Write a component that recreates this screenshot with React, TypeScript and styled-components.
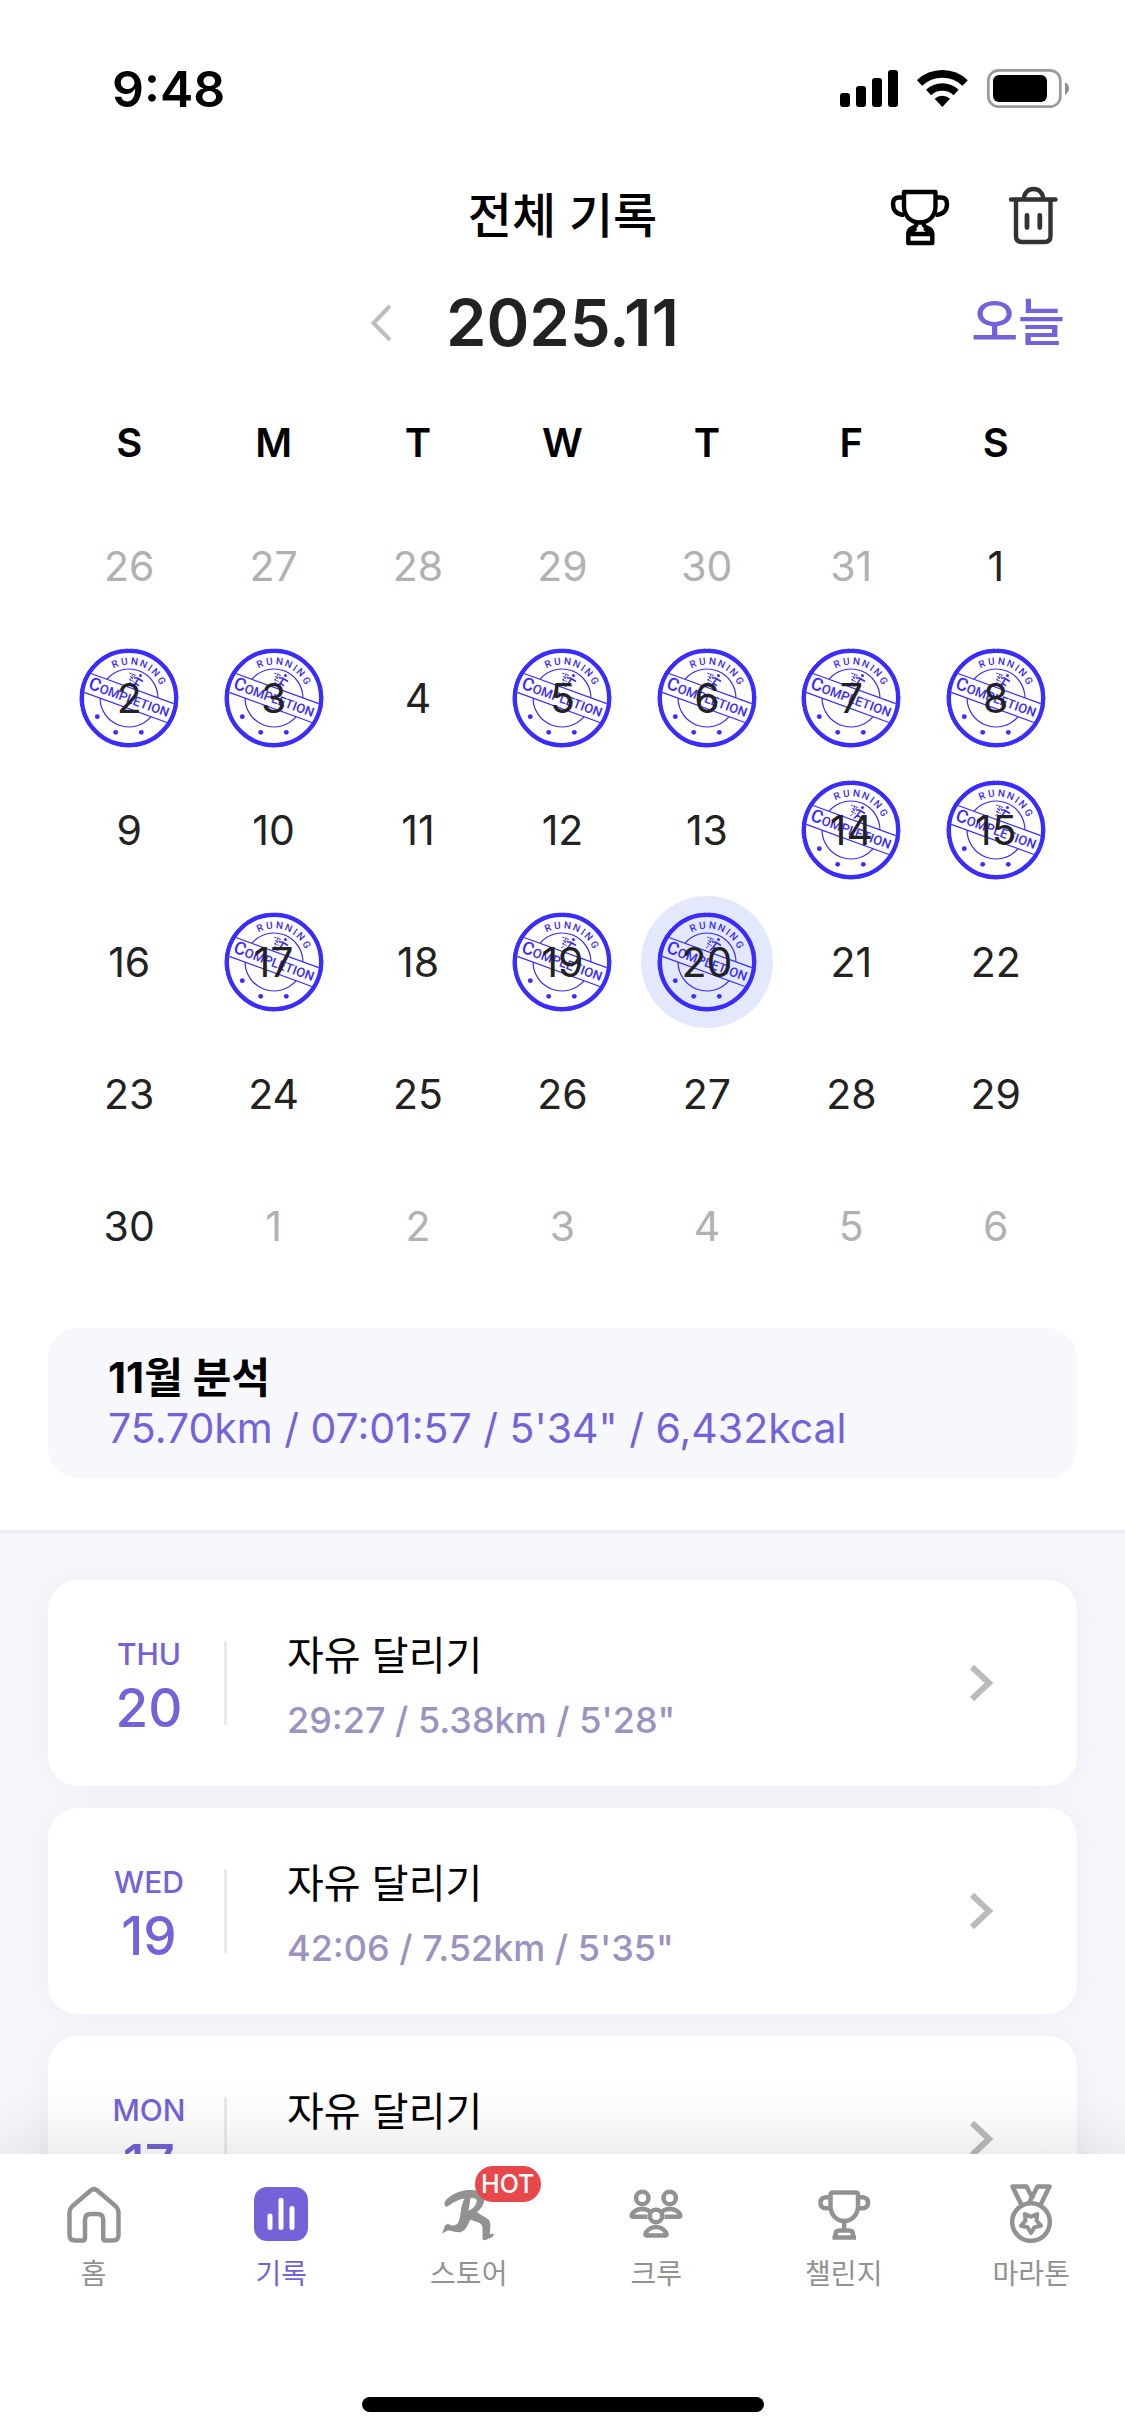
import React from "react";
import styled, { createGlobalStyle } from "styled-components";

const PURPLE = "#7463d8";
const GREY = "#929292";
const STAMP = "#3a2bff";

const GlobalStyle = createGlobalStyle`
  *, *::before, *::after { box-sizing: border-box; }
  body {
    margin: 0;
    background: #fff;
    color: #000;
    font-family: Inter, "Noto Sans CJK KR", sans-serif;
  }
  button {
    padding: 0;
    border: 0;
    background: none;
    color: inherit;
    font: inherit;
    cursor: pointer;
  }
  a { color: inherit; text-decoration: none; }
  h1, h2, h3, p { margin: 0; font: inherit; }
  svg { display: block; flex: none; }
`;

const Screen = styled.div`
  display: flex;
  flex-direction: column;
  height: 100vh;
  overflow: hidden;
`;

const StatusBar = styled.header`
  display: flex;
  flex: none;
  align-items: center;
  justify-content: space-between;
  height: 150px;
  padding: 27px 56px 0 112px;
`;

const Clock = styled.time`
  font-size: 50px;
  font-weight: 600;
  line-height: 60px;
`;

const StatusIcons = styled.div`
  display: flex;
  gap: 19px;
`;

const ThreePart = styled.div`
  display: grid;
  grid-template-columns: 1fr auto 1fr;
  flex: none;
  align-items: center;
`;

const TitleBar = styled(ThreePart)`
  height: 131px;
  padding: 0 62px;
`;

const PageTitle = styled.h1`
  grid-column: 2;
  font-size: 48px;
  font-weight: 500;
  line-height: 72px;
`;

const TitleActions = styled.div`
  display: flex;
  justify-content: flex-end;
  gap: 53px;
`;

const MonthBar = styled(ThreePart)`
  height: 84px;
  padding: 0 60px;
`;

const MonthLabel = styled.h2`
  color: #222;
  font-size: 65px;
  font-weight: 600;
  line-height: 84px;
`;

const PrevButton = styled.button`
  justify-self: end;
  margin-right: 52px;
`;

const TodayButton = styled.button`
  justify-self: end;
  color: ${PURPLE};
  font-size: 51px;
  font-weight: 500;
  line-height: 72px;
`;

const Content = styled.main`
  display: flex;
  flex: 1;
  flex-direction: column;
  min-height: 0;
  overflow: hidden;
`;

const CalendarWrap = styled.section`
  flex: none;
  padding: 19px 57px 36px;
`;

const CalendarTable = styled.table`
  width: 100%;
  border-collapse: collapse;
  table-layout: fixed;
`;

const Weekday = styled.th`
  height: 116px;
  padding: 0;
  font-size: 40px;
  font-weight: 600;
`;

const DayCell = styled.td`
  height: 132px;
  padding: 0;
`;

const DayButton = styled.button<{ $muted: boolean; $selected: boolean }>`
  display: grid;
  place-items: center;
  width: 132px;
  height: 132px;
  margin: 0 auto;
  border-radius: 50%;
  background: ${(p) => (p.$selected ? "#e4e8fd" : "transparent")};
  color: ${(p) => (p.$muted ? "#b1b1b1" : "#222")};
  font-size: 41px;

  > * { grid-area: 1 / 1; }
`;

const Summary = styled.section`
  flex: none;
  margin: 0 48px 52px;
  padding: 24px 60px;
  border-radius: 30px;
  background: #f7f8fc;
`;

const SummaryTitle = styled.h2`
  font-size: 42px;
  font-weight: 700;
  line-height: 51px;
`;

const SummaryText = styled.p`
  color: ${PURPLE};
  font-size: 41px;
  line-height: 51px;
`;

const RunList = styled.ul`
  display: flex;
  flex: none;
  flex-direction: column;
  gap: 22px;
  margin: 0;
  padding: 47px 48px;
  border-top: 3px solid #ededf7;
  background: #f6f7fc;
  list-style: none;
`;

const RunCard = styled.a`
  display: flex;
  align-items: center;
  height: 206px;
  padding: 0 82px 0 51px;
  border-radius: 30px;
  background: #fff;
  box-shadow: 0 0 30px rgba(30, 30, 80, 0.04);
`;

const RunDate = styled.div`
  display: flex;
  flex-direction: column;
  align-items: center;
  width: 100px;
  padding-top: 8px;
  color: ${PURPLE};
  font-weight: 500;
`;

const RunWeekday = styled.span`
  font-size: 30px;
  line-height: 42px;
`;

const RunDay = styled.span`
  font-size: 53px;
  line-height: 66px;
`;

const Rule = styled.span`
  width: 3px;
  height: 84px;
  margin: 0 60px 0 25px;
  background: #ebebeb;
`;

const RunInfo = styled.div`
  flex: 1;
  padding-top: 8px;
`;

const RunName = styled.h3`
  font-size: 40px;
  line-height: 66px;
`;

const RunStats = styled.p`
  color: #9b92c0;
  font-size: 36px;
  font-weight: 500;
  line-height: 62px;
`;

const TabBar = styled.nav`
  position: relative;
  flex: none;
  padding-top: 30px;
  background: #fff;
  box-shadow: 0 0 75px rgba(0, 0, 0, 0.14);
`;

const TabRow = styled.div`
  display: grid;
  grid-template-columns: repeat(6, 1fr);
`;

const Tab = styled.a<{ $active: boolean }>`
  display: flex;
  flex-direction: column;
  align-items: center;
  gap: 12px;
  color: ${(p) => (p.$active ? PURPLE : GREY)};
  font-size: 28px;
  line-height: 36px;
`;

const TabIcon = styled.span`
  position: relative;
`;

const HotBadge = styled.span`
  position: absolute;
  top: -18px;
  left: 36px;
  width: 66px;
  border-radius: 18px;
  background: #e8484b;
  color: #fff;
  font-size: 25px;
  font-weight: 500;
  line-height: 36px;
  text-align: center;
`;

const HomeIndicator = styled.div`
  width: 402px;
  height: 15px;
  margin: 105px auto 24px;
  border-radius: 8px;
  background: #000;
`;

const StampArt = styled.svg`
  text {
    fill: ${STAMP};
    font-family: Roboto, sans-serif;
    font-weight: 500;
  }
`;

function SignalIcon() {
  return (
    <svg width="58" height="39" viewBox="60 42 174 117">
      <rect x="60" y="114" width="30" height="42" rx="9" />
      <rect x="108" y="93" width="30" height="63" rx="9" />
      <rect x="156" y="69" width="30" height="87" rx="9" />
      <rect x="204" y="45" width="30" height="111" rx="9" />
    </svg>
  );
}

function WifiIcon() {
  return (
    <svg width="51" height="39" viewBox="291 42 153 117" fill="none" stroke="#000">
      <path d="M298.5 83.8A99.5 99.5 0 0 1 435.5 83.8" strokeWidth="23" />
      <path d="M325.7 112.5A60 60 0 0 1 408.3 112.5" strokeWidth="22" />
      <path d="M367 156L344 131A34 34 0 0 1 390 131Z" fill="#000" stroke="none" />
    </svg>
  );
}

function BatteryIcon() {
  return (
    <svg width="82" height="39" viewBox="501 42 246 117">
      <rect x="505" y="46" width="216" height="109" rx="31" fill="none" stroke="#9a9a9a" strokeWidth="8" />
      <rect x="519" y="60" width="162" height="81" rx="18" />
      <path d="M735 82Q747 88 747 100.500Q747 113 735 119Z" fill="#8f8f8f" />
    </svg>
  );
}

function AwardIcon() {
  return (
    <svg width="60" height="60" viewBox="0 0 60 60" fill="none" stroke="#000" strokeWidth="4.4" strokeLinejoin="round">
      <path d="M14 6H45.500V20C45.500 29 40 36.500 29.800 36.500C19.500 36.500 14 29 14 20Z" />
      <path d="M14 11.500H9Q3 11.500 3 18Q3 28 14 29M45.500 11.500H51Q57 11.500 57 18Q57 28 45.500 29" />
      <path d="M26.500 37C27 44 18.300 39.500 18.300 48M33.500 37C33 44 42.300 39.500 42.300 48" />
      <path d="M18.300 48H42.300V57H18.300Z" />
      <path d="M21 46L26 42M39.500 46L34.500 42" />
    </svg>
  );
}

function TrashIcon() {
  return (
    <svg width="60" height="60" viewBox="0 0 60 60" fill="none" stroke="#333" strokeWidth="4.4" strokeLinecap="round">
      <path d="M8 13.500H52.500M21 12.500C21 7 25 3 30.500 3S40 7 40 12.500" />
      <path d="M13 14V50Q13 56 19 56H41.500Q47.500 56 47.500 50V14" />
      <path d="M24 29.500V41.500M36.800 29.500V41.500" strokeWidth="4.800" />
    </svg>
  );
}

function PrevIcon() {
  return (
    <svg width="24" height="42" viewBox="0 0 24 42" fill="none" stroke="#bdbdbd" strokeWidth="4">
      <path d="M20 4L3.500 21L20 38" />
    </svg>
  );
}

function NextIcon() {
  return (
    <svg width="26" height="40" viewBox="0 0 26 40" fill="none" stroke="#bbb" strokeWidth="6">
      <path d="M3 4L20 20L3 36" />
    </svg>
  );
}

/* Letters of the rim text sit on an arc, each one turned to face outwards. */
const RIM_TEXT = "RUNNING";
const RIM_ANGLES = [-22, -7, 8, 23, 35, 46, 62];
const RIM_POINTS = RIM_ANGLES.map((deg, i) => {
  const half = RIM_TEXT[i] === "I" ? 1.4 : 3.3;
  const a = (deg * Math.PI) / 180;
  return {
    x: (50 + 33.5 * Math.sin(a) - half * Math.cos(a)).toFixed(2),
    y: (50 - 33.5 * Math.cos(a) - half * Math.sin(a)).toFixed(2),
    deg,
  };
});

function Stamp() {
  return (
    <StampArt width="100" height="100" viewBox="0 0 100 100" fill="none" stroke={STAMP} aria-hidden="true">
      <circle cx="50" cy="50" r="47" strokeWidth="4" />
      <circle cx="50" cy="50" r="49" strokeWidth="1" strokeDasharray="19 1 38 1.500 31 1 52 1.200 26 1" />
      <g transform="rotate(20 50 50)">
        <path d="M6 40H94M6 60H94M22.800 40A29 29 0 0 1 77.200 40M22.800 60A29 29 0 0 0 77.200 60" strokeWidth="1.200" />
        <text x="50" y="55" textAnchor="middle" fontSize="13" stroke="none">
          <tspan fontSize="18">C</tspan>OMPLETION
        </text>
      </g>
      <text
        x={RIM_POINTS.map((p) => p.x).join(" ")}
        y={RIM_POINTS.map((p) => p.y).join(" ")}
        rotate={RIM_POINTS.map((p) => p.deg).join(" ")}
        fontSize="10"
        stroke="none"
      >
        {RIM_TEXT}
      </text>
      <g fill={STAMP} stroke="none">
        <circle cx="18.300" cy="68.700" r="2.400" />
        <circle cx="36.700" cy="84.300" r="2.400" />
        <circle cx="62.300" cy="84.300" r="2.400" />
        <circle cx="61.500" cy="27.500" r="1.500" />
      </g>
      <path d="M60 30L56.500 35L60 38M56.500 35L53 38.500M60 31L64 33.500M59 30L55 30" strokeWidth="1.600" />
      <path d="M50 25L56 27M51 28L54 31M50 31L55 34M52 34L49 36M54 26L51 33M57 27L53 30" strokeWidth=".8" />
    </StampArt>
  );
}

const line = {
  width: 60,
  height: 60,
  viewBox: "0 0 60 60",
  fill: "none",
  stroke: "currentColor",
  strokeWidth: 4.5,
  strokeLinejoin: "round" as const,
};

function HomeIcon() {
  return (
    <svg {...line}>
      <path d="M5.500 28Q5.500 25 8 22.500L27 6.300Q30 4 33 6.300L52 22.500Q54.500 25 54.500 28V51Q54.500 56.500 49 56.500H41.500Q39.200 56.500 39.200 54V36Q39.200 30 33.500 30H26.500Q21 30 21 36V54Q21 56.500 18.500 56.500H11Q5.500 56.500 5.500 51Z" />
    </svg>
  );
}

function RecordIcon() {
  return (
    <svg width="60" height="60" viewBox="0 0 60 60">
      <rect x="3" y="3" width="54" height="54" rx="13" fill="currentColor" />
      <path d="M19 32V43.500M30 16.200V43.500M41 24.500V43.500" stroke="#fff" strokeWidth="5" strokeLinecap="round" />
    </svg>
  );
}

function StoreIcon() {
  return (
    <svg width="60" height="60" viewBox="0 0 60 60" fill="currentColor">
      <path d="M7.300 23C4 20 5.500 17.500 8.500 14.500C16 8 25 5.500 35 6.200C41 6.500 46 9 45.500 15C45 21 41.500 25.500 38 28C41 31 46 32.500 49.500 35.500C53 39.500 50.500 45 51 50.500C52 49.500 53.500 49.500 55 50L53.500 53L46 56.200L43.500 55.500V44C43.500 37.500 35 38 31.500 35.500C28.500 41 27.500 46 22 48C17.500 49 12 46 8.500 46.500L3 49.800L6 41.500L9 39.500C12 42.500 17.500 42 19 39C22.500 32 21 22 25.500 14.500C19 15.500 14.500 18.500 11.500 20.500ZM31.500 14L29.500 27C34 24.500 37.500 21.500 37.700 16.500C37.700 14.500 35 14 31.500 14Z" />
    </svg>
  );
}

function CrewIcon() {
  return (
    <svg {...line}>
      <circle cx="16.300" cy="14" r="6.200" />
      <circle cx="43.700" cy="14" r="6.200" />
      <circle cx="30" cy="32" r="6.200" />
      <path d="M21.500 32.800H7Q4.500 32.500 6.500 29.500Q10 25 16 25Q21 25 24 27.500M38.500 32.800H53Q55.500 32.500 53.500 29.500Q50 25 44 25Q39 25 36 27.500" />
      <path d="M21 51.500H39Q41.500 51.500 40 48.500Q36.500 43 30 43Q23.500 43 20 48.500Q18.500 51.500 21 51.500Z" />
    </svg>
  );
}

function ChallengeIcon() {
  return (
    <svg {...line}>
      <path d="M16.500 11Q16.500 8.500 19 8.500H41.500Q44 8.500 44 11V22C44 30.500 38 37 30.200 37C22.500 37 16.500 30.500 16.500 22Z" />
      <path d="M16.500 13.200H12Q6.500 13.500 6.500 18.700Q6.500 24 12 24.200H16.500M44 13.200H48.500Q54 13.500 54 18.700Q54 24 48.500 24.200H44" />
      <path d="M30.200 37V46M18.500 53.500H42M21.500 53V50.500Q21.500 46.500 25.500 46.500H35Q39 46.500 39 50.500V53" />
    </svg>
  );
}

/* Five-pointed star with rounded tips, built from its corner points. */
const STAR_POINTS = Array.from({ length: 10 }, (_, i) => {
  const r = i % 2 ? 5.8 : 10.5;
  const a = (i * Math.PI) / 5;
  return `${(30 + r * Math.sin(a)).toFixed(1)},${(38.5 - r * Math.cos(a)).toFixed(1)}`;
}).join(" ");

function MarathonIcon() {
  return (
    <svg {...line}>
      <path d="M20.500 21L11.500 2.500H25.500L32 15M39.500 21L48.500 2.500H36.500L27.500 20" />
      <circle cx="30" cy="38" r="18.800" />
      <polygon points={STAR_POINTS} strokeWidth="4" transform="rotate(180 30 38.500)" />
    </svg>
  );
}

const WEEKDAYS = ["S", "M", "T", "W", "T", "F", "S"];
const FULL_WEEKDAYS = ["일요일", "월요일", "화요일", "수요일", "목요일", "금요일", "토요일"];
const COMPLETED = [2, 3, 5, 6, 7, 8, 14, 15, 17, 19, 20];
const SELECTED = 20;

/* Six weeks starting on Sunday 26 October. */
const WEEKS = Array.from({ length: 6 }, (_, week) =>
  Array.from({ length: 7 }, (_, weekday) => {
    const offset = week * 7 + weekday - 5;
    if (offset < 1) return { day: offset + 31, inMonth: false };
    if (offset > 30) return { day: offset - 30, inMonth: false };
    return { day: offset, inMonth: true };
  })
);

const RUNS = [
  { weekday: "THU", day: 20, name: "자유 달리기", stats: "29:27 / 5.38km / 5'28\"" },
  { weekday: "WED", day: 19, name: "자유 달리기", stats: "42:06 / 7.52km / 5'35\"" },
  { weekday: "MON", day: 17, name: "자유 달리기", stats: "" },
];

const TABS = [
  { label: "홈", Icon: HomeIcon },
  { label: "기록", Icon: RecordIcon, active: true },
  { label: "스토어", Icon: StoreIcon, badge: "HOT" },
  { label: "크루", Icon: CrewIcon },
  { label: "챌린지", Icon: ChallengeIcon },
  { label: "마라톤", Icon: MarathonIcon },
];

export default function App() {
  return (
    <Screen>
      <GlobalStyle />
      <StatusBar>
        <Clock>9:48</Clock>
        <StatusIcons>
          <SignalIcon />
          <WifiIcon />
          <BatteryIcon />
        </StatusIcons>
      </StatusBar>
      <Content>
        <TitleBar>
          <PageTitle>전체 기록</PageTitle>
          <TitleActions>
            <button type="button" aria-label="트로피">
              <AwardIcon />
            </button>
            <button type="button" aria-label="삭제">
              <TrashIcon />
            </button>
          </TitleActions>
        </TitleBar>
        <MonthBar>
          <PrevButton type="button" aria-label="이전 달">
            <PrevIcon />
          </PrevButton>
          <MonthLabel>2025.11</MonthLabel>
          <TodayButton type="button">오늘</TodayButton>
        </MonthBar>
        <CalendarWrap>
          <CalendarTable>
            <thead>
              <tr>
                {WEEKDAYS.map((name, i) => (
                  <Weekday key={i} scope="col" aria-label={FULL_WEEKDAYS[i]}>
                    {name}
                  </Weekday>
                ))}
              </tr>
            </thead>
            <tbody>
              {WEEKS.map((week, w) => (
                <tr key={w}>
                  {week.map(({ day, inMonth }) => (
                    <DayCell key={day}>
                      <DayButton type="button" $muted={!inMonth} $selected={inMonth && day === SELECTED}>
                        {inMonth && COMPLETED.includes(day) && <Stamp />}
                        <span>{day}</span>
                      </DayButton>
                    </DayCell>
                  ))}
                </tr>
              ))}
            </tbody>
          </CalendarTable>
        </CalendarWrap>
        <Summary>
          <SummaryTitle>11월 분석</SummaryTitle>
          <SummaryText>75.70km / 07:01:57 / 5'34" / 6,432kcal</SummaryText>
        </Summary>
        <RunList>
          {RUNS.map((run) => (
            <li key={run.day}>
              <RunCard href={`#run-${run.day}`}>
                <RunDate>
                  <RunWeekday>{run.weekday}</RunWeekday>
                  <RunDay>{run.day}</RunDay>
                </RunDate>
                <Rule />
                <RunInfo>
                  <RunName>{run.name}</RunName>
                  <RunStats>{run.stats || "\u00a0"}</RunStats>
                </RunInfo>
                <NextIcon />
              </RunCard>
            </li>
          ))}
        </RunList>
      </Content>
      <TabBar>
        <TabRow>
          {TABS.map(({ label, Icon, active, badge }) => (
            <Tab key={label} href={`#${label}`} $active={Boolean(active)} aria-current={active ? "page" : undefined}>
              <TabIcon>
                <Icon />
                {badge && <HotBadge>{badge}</HotBadge>}
              </TabIcon>
              <span>{label}</span>
            </Tab>
          ))}
        </TabRow>
        <HomeIndicator />
      </TabBar>
    </Screen>
  );
}
